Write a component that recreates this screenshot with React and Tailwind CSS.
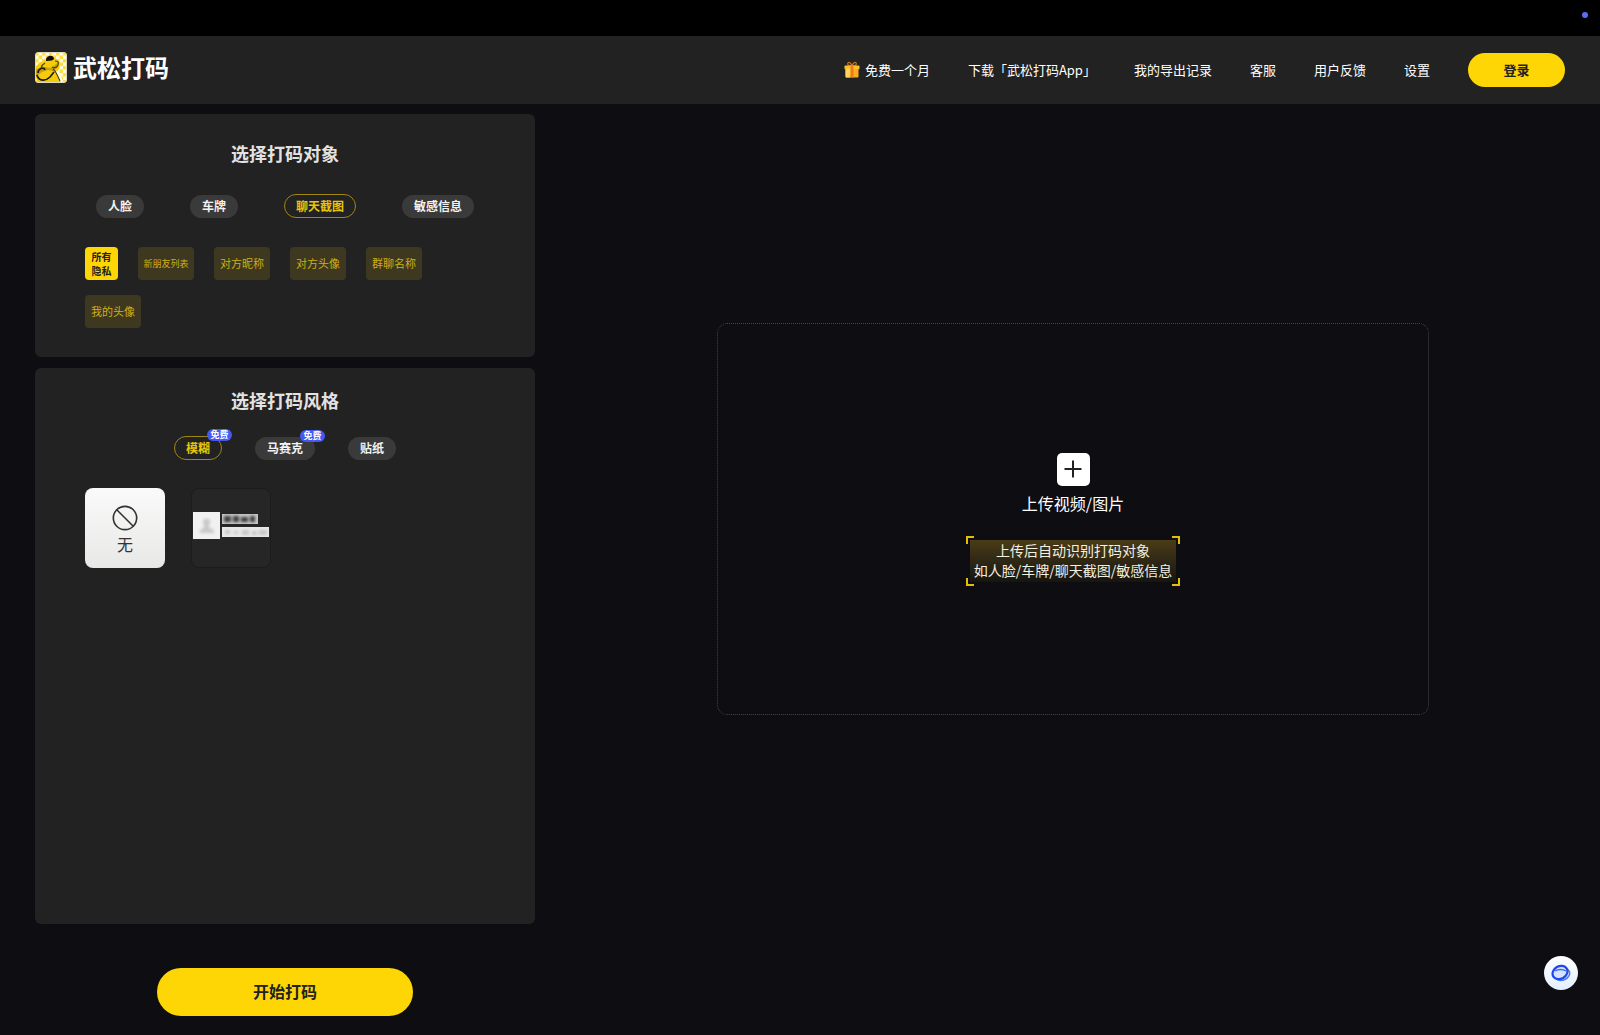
// React
import { useState } from "react";

// Icons
import { Ban } from "lucide-react";

const navLinks = ["下载「武松打码App」", "我的导出记录", "客服", "用户反馈", "设置"];

const targets = ["人脸", "车牌", "聊天截图", "敏感信息"];

const privacyTags = ["新朋友列表", "对方昵称", "对方头像", "群聊名称", "我的头像"];

const styles = [
  { name: "模糊", free: true },
  { name: "马赛克", free: true },
  { name: "贴纸", free: false },
];

const App = () => (
  <div className="flex min-h-screen flex-col bg-[#0e0d12] font-['Noto_Sans_CJK_SC',sans-serif] text-white">
    <TopBar />
    <Header />
    <main className="flex grow flex-col px-[35px] pt-[10px] pb-[19px]">
      <div className="flex grow gap-[11px]">
        <div className="flex w-[500px] shrink-0 flex-col gap-[11px]">
          <TargetPanel />
          <StylePanel />
        </div>
        <section className="-mr-[35px] flex grow items-center justify-center">
          <UploadArea />
        </section>
      </div>
      <div className="mt-11 flex w-[500px] justify-center">
        <button
          type="button"
          className="h-12 w-64 rounded-full bg-[#ffd605] pb-0.5 text-base font-bold text-[#222]"
        >
          开始打码
        </button>
      </div>
    </main>
    <HelpButton />
  </div>
);

const TopBar = () => (
  <div className="flex h-9 justify-end bg-black pt-3 pr-3">
    <span className="size-[6px] rounded-full bg-[#5b6cf5]" />
  </div>
);

const Header = () => (
  <header className="flex h-[68px] items-center justify-between bg-[#222] px-[35px] pb-px">
    <a href="#" className="mb-1 flex items-center gap-[6px]">
      <LogoIcon />
      <span className="pb-0.5 text-2xl leading-7 font-bold">武松打码</span>
    </a>
    <nav className="flex items-center gap-[38px] text-[13px]">
      <a href="#" className="flex items-center gap-[5px]">
        <GiftIcon />
        免费一个月
      </a>
      {navLinks.map((link) => (
        <a key={link} href="#">
          {link}
        </a>
      ))}
      <button
        type="button"
        className="h-[34px] w-[97px] rounded-full bg-[#ffd605] font-bold text-[#222]"
      >
        登录
      </button>
    </nav>
  </header>
);

// Pill shared by both panels
const Pill = ({ active, onClick, children }) => (
  <button
    type="button"
    onClick={onClick}
    className={
      active
        ? "h-6 rounded-full border border-[#a08714] px-[11px] text-xs font-bold text-[#e8c40c]"
        : "h-[23px] rounded-full bg-[#3a3a3a] px-3 text-xs font-bold text-[#f2f2f2]"
    }
  >
    {children}
  </button>
);

const TargetPanel = () => {
  const [target, setTarget] = useState("聊天截图");

  return (
    <section className="rounded-md bg-[#222] px-[50px] pt-[25px] pb-[29px]">
      <h2 className="text-center text-lg leading-7 font-bold text-[#e2e2e2]">
        选择打码对象
      </h2>
      <div className="mt-[27px] flex items-center justify-center gap-[46px]">
        {targets.map((name) => (
          <Pill
            key={name}
            active={name === target}
            onClick={() => setTarget(name)}
          >
            {name}
          </Pill>
        ))}
      </div>
      <div className="mt-[29px] flex flex-wrap gap-x-5 gap-y-[15px]">
        <button
          type="button"
          className="size-[33px] rounded-sm bg-[#ffd605] text-[10px] leading-[14px] font-bold text-[#222]"
        >
          所有
          <br />
          隐私
        </button>
        {privacyTags.map((tag) => (
          <button
            key={tag}
            type="button"
            className={`h-[33px] w-14 rounded-sm bg-[#3e3821] whitespace-nowrap text-[#cfaf14] ${
              tag.length > 4 ? "text-[9px]" : "text-[11px]"
            }`}
          >
            {tag}
          </button>
        ))}
      </div>
    </section>
  );
};

const StylePanel = () => {
  const [style, setStyle] = useState("模糊");

  return (
    <section className="grow rounded-md bg-[#222] px-[50px] pt-[18px]">
      <h2 className="text-center text-lg leading-7 font-bold text-[#e2e2e2]">
        选择打码风格
      </h2>
      <div className="mt-[22px] flex items-center justify-center gap-[33px]">
        {styles.map(({ name, free }) => (
          <div key={name} className="relative flex">
            <Pill active={name === style} onClick={() => setStyle(name)}>
              {name}
            </Pill>
            {free && (
              <span className="absolute -top-[7px] -right-[10px] flex h-3 w-[25px] items-center justify-center rounded-full bg-[#4558f5] text-[9px] font-bold">
                免费
              </span>
            )}
          </div>
        ))}
      </div>
      <div className="mt-7 flex gap-[26px]">
        <button
          type="button"
          className="flex size-20 flex-col items-center justify-center rounded-lg bg-linear-to-b from-[#fafafa] to-[#e8e8e7] pt-1 text-[#333]"
        >
          <Ban className="size-7 -scale-x-100 rotate-90" strokeWidth={1.4} />
          <span className="text-base leading-6">无</span>
        </button>
        <button
          type="button"
          aria-label="聊天截图模糊"
          className="size-20 overflow-hidden rounded-lg border border-[#1c1c1c] bg-[#262626]"
        >
          <BlurPreview />
        </button>
      </div>
    </section>
  );
};

const UploadArea = () => (
  <button
    type="button"
    className="flex aspect-[712/392] w-[67.5%] flex-col items-center justify-center rounded-[10px] border border-dotted border-[#454548]"
  >
    <span className="flex size-[33px] items-center justify-center rounded-[5px] bg-white">
      <svg viewBox="0 0 18 18" className="size-[18px]">
        <path d="M9 0.5v17M0.5 9h17" stroke="#222" strokeWidth="2" />
      </svg>
    </span>
    <span className="mt-[5px] text-base leading-6">上传视频/图片</span>
    <ScanTip />
  </button>
);

// Hint text inside the yellow scan frame
const ScanTip = () => (
  <span className="relative mt-[21px] block p-1">
    <span className="block bg-linear-to-b from-[#4a3c17] to-[#16150f] px-1 pb-0.5 text-sm leading-5 text-[#f3f0e4]">
      上传后自动识别打码对象
      <br />
      如人脸/车牌/聊天截图/敏感信息
    </span>
    <span className="absolute top-0 left-0 size-2 border-t-2 border-l-2 border-[#e2bd0b]" />
    <span className="absolute top-0 right-0 size-2 border-t-2 border-r-2 border-[#e2bd0b]" />
    <span className="absolute bottom-0 left-0 size-2 border-b-2 border-l-2 border-[#e2bd0b]" />
    <span className="absolute right-0 bottom-0 size-2 border-r-2 border-b-2 border-[#e2bd0b]" />
  </span>
);

const HelpButton = () => (
  <button
    type="button"
    aria-label="在线客服"
    className="fixed right-[22px] bottom-[45px] flex size-[34px] items-center justify-center rounded-full bg-linear-to-b from-white to-[#e3efff]"
  >
    <svg viewBox="0 0 20 20" className="size-5" fill="none">
      <ellipse cx="11.5" cy="11.5" rx="7.5" ry="5.500" transform="rotate(-25 11.5 11.5)" fill="#d3e4fc" stroke="#4f7cf5" strokeWidth="1.500" />
      <ellipse cx="9" cy="9.5" rx="7.8" ry="6.300" transform="rotate(-30 9 9.5)" fill="#d3e4fc" stroke="#2148ef" strokeWidth="2.200" />
      <path d="M4 8c3-2 8-2 11 0" stroke="#3f68f3" strokeWidth="1.400" />
    </svg>
  </button>
);

const LogoIcon = () => (
  <svg viewBox="0 0 32 31" className="h-[31px] w-8">
    <defs>
      <pattern id="checks" width="7" height="7" patternUnits="userSpaceOnUse">
        <rect width="7" height="7" fill="#fffbe0" />
        <rect width="3.500" height="3.500" fill="#ffdf3d" />
        <rect x="3.500" y="3.500" width="3.500" height="3.500" fill="#ffdf3d" />
      </pattern>
    </defs>
    <rect x="0.5" y="0.5" width="31" height="30" rx="2.500" fill="url(#checks)" stroke="#dcdabf" />
    <path d="M1 14l5-4 3-1 3-3h8l5 4-1 7-3 3 5 10H3l-2-4z" fill="#f6cc0a" />
    <path d="M11 8c0-5 8-6 8-1l-2 1.500-6 .5z" fill="#0d0d0d" />
    <path d="M1 17l9-2 5 1 4-2 4-4-1 6-4 3-5-1-6 2-6 5z" fill="#c49f10" />
    <path d="M3 21c0-5 6-6 7-3M2 23c2 7 9 6 13 2l4-5" fill="none" stroke="#1c1a0c" strokeWidth="1.700" />
    <path d="M18 17c3 2 4 5 7 12M10 11c-2 1-3 2-4 5M20 9c3 0 4 1 3 4s-4 3-6 2" fill="none" stroke="#4b4110" strokeWidth="1.200" />
    <path d="M21 19l5 10 2 0-4-9z" fill="#fffdf0" />
  </svg>
);

const GiftIcon = () => (
  <svg viewBox="0 0 16 17" className="h-[17px] w-4" fill="none">
    <path d="M8 5C4 5 3 3 4 1.800S7 2 8 5c1-3 3-4.400 4-3.200S12 5 8 5z" stroke="#c9761a" strokeWidth="1.200" />
    <rect x="0.500" y="4.500" width="15" height="4" rx="1" fill="#fcc02e" />
    <rect x="1.500" y="8" width="13" height="8.500" rx="1" fill="#fbac20" />
    <rect x="1.500" y="8" width="5" height="8.500" rx="1" fill="#ffd65c" />
    <path d="M6.500 4.500h3v12h-3z" fill="#f27a16" />
  </svg>
);

const BlurPreview = () => (
  <svg viewBox="0 0 78 78" className="size-full">
    <defs>
      <filter id="soft" x="-20%" y="-40%" width="140%" height="180%">
        <feGaussianBlur stdDeviation="1.500" />
      </filter>
    </defs>
    <rect x="1" y="23" width="27" height="27" fill="#f1f1f1" />
    <g filter="url(#soft)" fill="#c8c8c8">
      <circle cx="14.500" cy="33" r="3.500" />
      <path d="M12 34h5v5l5 2v3H8v-3l4-2z" />
    </g>
    <rect x="30" y="25" width="36" height="10" fill="#c8c8c8" />
    <g filter="url(#soft)" fill="#3d3d3d">
      <rect x="32" y="27" width="7" height="6" />
      <rect x="41" y="27" width="6" height="6" />
      <rect x="49" y="28" width="7" height="5" />
      <rect x="58" y="27" width="5" height="6" />
    </g>
    <rect x="30" y="38" width="47" height="10" fill="#e9e9e9" />
    <g filter="url(#soft)" fill="#c6c6c6">
      <rect x="33" y="41" width="5" height="4" />
      <rect x="42" y="42" width="4" height="3" />
      <rect x="50" y="41" width="7" height="5" />
      <rect x="60" y="42" width="5" height="4" />
      <rect x="67" y="41" width="8" height="5" />
    </g>
  </svg>
);

export default App;
